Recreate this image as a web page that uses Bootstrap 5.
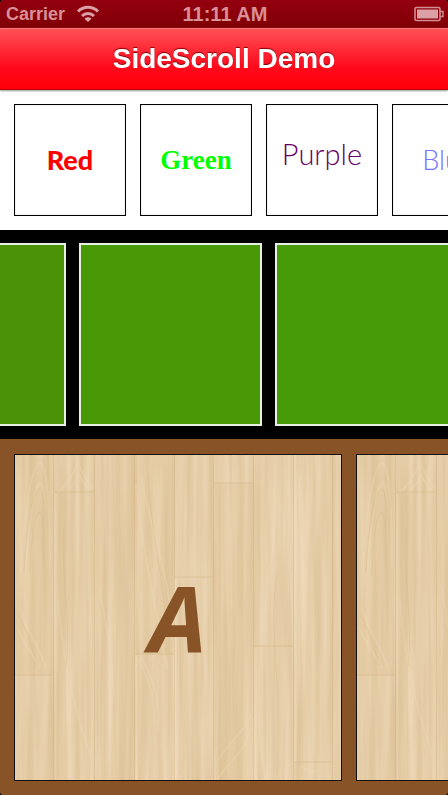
<!DOCTYPE html>
<html lang="en">
<head>
<meta charset="utf-8">
<meta name="viewport" content="width=device-width, initial-scale=1">
<title>SideScroll Demo</title>
<link href="https://cdn.jsdelivr.net/npm/bootstrap@5.3.0/dist/css/bootstrap.min.css" rel="stylesheet">
<style>
body { background: #000; font-family: "Liberation Sans", Arial, sans-serif; }
.screen { min-height: 100vh; border-radius: 4px; background: #885427; }
.status { height: 28px; padding: 0 4px 0 6px; color: #d98f96; background: linear-gradient(#93000f, #800006); font-size: 18px; line-height: 28px; }
.status-side { flex: 1 1 0; }
.clock { font-size: 20px; }
.titlebar { height: 62px; background: linear-gradient(#ff5055, #ff0a1c 64%, #ff0008); border-top: 1px solid #f87379; border-bottom: 1px solid #b40008; box-shadow: 0 1px 2px #8a9a95; z-index: 1; }
.titlebar h1 { font-size: 28px; line-height: 32px; color: #fff; text-shadow: 0 -1px 1px #7c0008; }
.strip { display: flex; overflow-x: auto; scrollbar-width: none; padding: 14px; }
.strip::-webkit-scrollbar { display: none; }
.strip > * { flex: none; }
.words { gap: 14px; background: #fff; }
.word { width: 112px; height: 112px; border: 1px solid #000; box-shadow: inset 0 0 1px #777; line-height: 40px; }
.word-red { font-family: Lato, sans-serif; font-weight: 900; font-size: 27px; color: #f00; }
.word-green { font-family: "Liberation Serif", serif; font-weight: 700; font-size: 27px; color: #0f0; }
.word-purple { font-family: Lato, sans-serif; font-weight: 300; font-size: 29px; color: #660066; padding-bottom: 12px; }
.word-blue { font-family: Lato, sans-serif; font-weight: 300; font-size: 27px; color: #7474ff; }
.greens { gap: 13px; padding: 13px 14px; background: #000; }
.green-tile { width: 183px; height: 183px; border: 2px solid #e8f0e4; background: #499806; }
.green-first { background: #4c9206; }
.green-last { background: #479b08; }
.boards { gap: 14px; background: #885427; padding-top: 15px; }
.board { width: 328px; height: 327px; border: 1px solid #111; background: #e4cca5; }
.letter { font-family: "Open Sans", sans-serif; font-size: 92px; font-weight: 700; font-style: italic; line-height: 96px; color: #885427; }
</style>
<script src="https://cdn.jsdelivr.net/npm/bootstrap@5.3.0/dist/js/bootstrap.bundle.min.js"></script>
</head>
<body>
<svg width="0" height="0" class="position-absolute" aria-hidden="true">
  <defs>
    <filter id="fine" x="0" y="0" width="100%" height="100%" color-interpolation-filters="sRGB">
      <feTurbulence type="fractalNoise" baseFrequency="0.14 0.005" numOctaves="3" seed="8"/>
      <feColorMatrix values="0.09 0 0 0 0.855  0.12 0 0 0 0.745  0.18 0 0 0 0.57  0 0 0 0 1"/>
    </filter>
    <symbol id="wood" viewBox="0 0 326 326" preserveAspectRatio="xMidYMid slice">
      <rect width="326" height="326" fill="#e4cca5"/>
      <rect width="326" height="326" filter="url(#fine)"/>
      <g fill="#dcbb86" opacity=".16">
        <path d="M0 0h38v221H0zM120 0h39v200h-39zM199 29h39v297h-39zM39 38h12v288H39zM104 0h16v326h-16z"/>
      </g>
      <g fill="none" stroke="#f0dcb9" stroke-width="2" opacity=".3">
        <path d="M6 120C8 60 16 15 24 9s11 45 11 104M11 120C12 75 20 31 25 28s7 43 7 85M6 155c7 26 18 35 25 59M2 172c6 18 17 28 23 42M43 37c7-4 16-18 20-29 4 12 10 20 15 26M52 36c6-4 10-10 12-16 3 7 6 11 11 15M121 30c5 64 21 124 31 185M126 22c10 54 27 96 30 140M43 145c4 54 16 109 33 157M84 130c5 28 13 69 15 112M123 205c8 14 18 35 16 66M127 204c11 24 19 38 16 72M203 306c11-20 25-25 34-48M203 324c10-18 22-19 34-50M245 205c-3 32-2 70 5 121M258 34c10 41-12 91-7 155M287 20c-18 60-11 131-6 190M286 312c8 3 8 8 16 4"/>
      </g>
      <g fill="none" stroke="#d9b988" stroke-width="1" opacity=".4">
        <path d="M9 118c2-50 9-79 15-83s9 40 8 78M15 121c1-40 5-62 9-63s5 20 5 55M3 161c10 17 13 29 20 50M49 73c-4 52 8 91 2 139M133 22c4 68 20 115 19 180M165 129v191M205 30v295M262 120c-9 57 5 95 0 200"/>
      </g>
      <path d="M38.500 0V326M79.500 0V326M119.500 0V326M159.500 0V326M198.500 0V326M238.500 0V326M278.500 0V326M317.500 0V326M0 220.500H38M39 37.500H79M159 122.500H198M199 28.500H238M120 199.500H159M239 191.500H278M279 307.500H317" fill="none" stroke="#d0ae7c" stroke-width="1" opacity=".4"/>
      <path d="M40.500 39V326M160.500 124V326M121.500 201V326M240.500 193V326M280.500 0V307" fill="none" stroke="#f3e3c6" stroke-width="2" opacity=".35"/>
    </symbol>
  </defs>
</svg>
<div class="screen overflow-hidden d-flex flex-column">
  <div class="status d-flex align-items-center fw-bold">
    <div class="status-side d-flex align-items-center">
      <span>Carrier</span>
      <svg class="ms-2" width="30" height="20" viewBox="0 0 30 20" role="img" aria-label="Wi-Fi">
        <g fill="none" stroke="#dda0a6" stroke-width="3">
          <path d="M5 7.500a14 14 0 0 1 20 0"/><path d="M9 12a8.500 8.500 0 0 1 12 0"/>
        </g>
        <path d="M11.500 14.800a5 5 0 0 1 7 0L15 18z" fill="#dda0a6"/>
      </svg>
    </div>
    <div class="clock">11:11 AM</div>
    <div class="status-side d-flex justify-content-end">
      <svg width="30" height="16" viewBox="0 0 30 16" role="img" aria-label="Battery full">
        <rect x="1" y="1.500" width="25" height="13" rx="1.500" fill="none" stroke="#d58d94" stroke-width="1.600"/>
        <rect x="3" y="3.500" width="21" height="9" fill="#dca0a6"/>
        <path d="M26.500 5.500H29v5h-2.500" fill="none" stroke="#d58d94" stroke-width="1.400"/>
      </svg>
    </div>
  </div>
  <header class="titlebar d-flex align-items-center justify-content-center position-relative">
    <h1 class="m-0 fw-bold">SideScroll Demo</h1>
  </header>
  <main>
    <section class="strip words" aria-label="Colours">
      <div class="word word-red d-flex align-items-center justify-content-center">Red</div>
      <div class="word word-green d-flex align-items-center justify-content-center">Green</div>
      <div class="word word-purple d-flex align-items-center justify-content-center">Purple</div>
      <div class="word word-blue d-flex align-items-center justify-content-center">Blue</div>
    </section>
    <section class="strip greens" id="greens" aria-label="Green tiles">
      <div class="green-tile green-first"></div>
      <div class="green-tile"></div>
      <div class="green-tile green-last"></div>
      <div class="green-tile green-last"></div>
    </section>
    <section class="strip boards" aria-label="Letters">
      <div class="board position-relative d-flex align-items-center justify-content-center">
        <svg class="position-absolute top-0 start-0 w-100 h-100" aria-hidden="true"><use href="#wood"/></svg>
        <span class="letter position-relative">A</span>
      </div>
      <div class="board position-relative">
        <svg class="position-absolute top-0 start-0 w-100 h-100" aria-hidden="true"><use href="#wood"/></svg>
      </div>
    </section>
  </main>
</div>
<script>
document.getElementById('greens').scrollLeft = 131;
</script>
</body>
</html>
